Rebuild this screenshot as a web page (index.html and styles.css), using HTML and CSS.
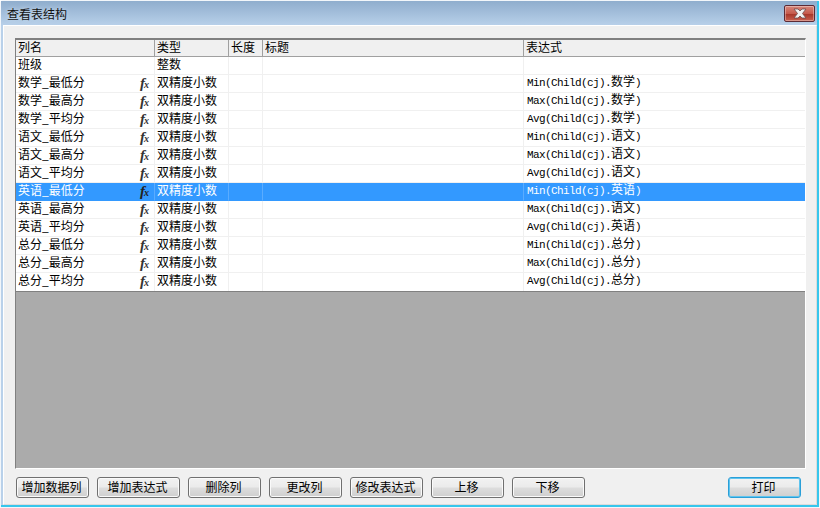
FILE: index.html
```html
<!DOCTYPE html>
<html lang="zh">
<head>
<meta charset="utf-8">
<title>查看表结构</title>
<link rel="stylesheet" href="styles.css">
</head>
<body>
<div class="window">
 <div class="frame">
  <div class="titlebar">
    <span class="title">查看表结构</span>
    <span class="close"><svg width="16" height="11" viewBox="0 0 16 11"><path d="M2 1h4l2 2 2-2h4l-3.500 4.500 3.500 4.500h-4l-2-2-2 2H2l3.500-4.500z" fill="#f2f2f2" stroke="#6b4a4a" stroke-width="0.8"/></svg></span>
  </div>
  <div class="client">
    <div class="grid-area">
      <div class="row head"><div class="c c1">列名</div><div class="c c2">类型</div><div class="c c3">长度</div><div class="c c4">标题</div><div class="c c5 headlast">表达式</div></div>
      <div class="row"><div class="c c1">班级</div><div class="c c2">整数</div><div class="c c3"></div><div class="c c4"></div><div class="c c5"></div></div>
      <div class="row"><div class="c c1">数学_最低分<span class="fx">f<small>x</small></span></div><div class="c c2">双精度小数</div><div class="c c3"></div><div class="c c4"></div><div class="c c5 expr">Min(Child(cj).<span class="cjk">数学</span>)</div></div>
      <div class="row"><div class="c c1">数学_最高分<span class="fx">f<small>x</small></span></div><div class="c c2">双精度小数</div><div class="c c3"></div><div class="c c4"></div><div class="c c5 expr">Max(Child(cj).<span class="cjk">数学</span>)</div></div>
      <div class="row"><div class="c c1">数学_平均分<span class="fx">f<small>x</small></span></div><div class="c c2">双精度小数</div><div class="c c3"></div><div class="c c4"></div><div class="c c5 expr">Avg(Child(cj).<span class="cjk">数学</span>)</div></div>
      <div class="row"><div class="c c1">语文_最低分<span class="fx">f<small>x</small></span></div><div class="c c2">双精度小数</div><div class="c c3"></div><div class="c c4"></div><div class="c c5 expr">Min(Child(cj).<span class="cjk">语文</span>)</div></div>
      <div class="row"><div class="c c1">语文_最高分<span class="fx">f<small>x</small></span></div><div class="c c2">双精度小数</div><div class="c c3"></div><div class="c c4"></div><div class="c c5 expr">Max(Child(cj).<span class="cjk">语文</span>)</div></div>
      <div class="row"><div class="c c1">语文_平均分<span class="fx">f<small>x</small></span></div><div class="c c2">双精度小数</div><div class="c c3"></div><div class="c c4"></div><div class="c c5 expr">Avg(Child(cj).<span class="cjk">语文</span>)</div></div>
      <div class="row selected"><div class="c c1">英语_最低分<span class="fx">f<small>x</small></span></div><div class="c c2">双精度小数</div><div class="c c3"></div><div class="c c4"></div><div class="c c5 expr">Min(Child(cj).<span class="cjk">英语</span>)</div></div>
      <div class="row"><div class="c c1">英语_最高分<span class="fx">f<small>x</small></span></div><div class="c c2">双精度小数</div><div class="c c3"></div><div class="c c4"></div><div class="c c5 expr">Max(Child(cj).<span class="cjk">语文</span>)</div></div>
      <div class="row"><div class="c c1">英语_平均分<span class="fx">f<small>x</small></span></div><div class="c c2">双精度小数</div><div class="c c3"></div><div class="c c4"></div><div class="c c5 expr">Avg(Child(cj).<span class="cjk">英语</span>)</div></div>
      <div class="row"><div class="c c1">总分_最低分<span class="fx">f<small>x</small></span></div><div class="c c2">双精度小数</div><div class="c c3"></div><div class="c c4"></div><div class="c c5 expr">Min(Child(cj).<span class="cjk">总分</span>)</div></div>
      <div class="row"><div class="c c1">总分_最高分<span class="fx">f<small>x</small></span></div><div class="c c2">双精度小数</div><div class="c c3"></div><div class="c c4"></div><div class="c c5 expr">Max(Child(cj).<span class="cjk">总分</span>)</div></div>
      <div class="row last"><div class="c c1">总分_平均分<span class="fx">f<small>x</small></span></div><div class="c c2">双精度小数</div><div class="c c3"></div><div class="c c4"></div><div class="c c5 expr">Avg(Child(cj).<span class="cjk">总分</span>)</div></div>
      <div class="empty"></div>
    </div>
    <div class="buttons">
      <button class="btn">增加数据列</button>
      <button class="btn wide">增加表达式</button>
      <button class="btn">删除列</button>
      <button class="btn">更改列</button>
      <button class="btn">修改表达式</button>
      <button class="btn">上移</button>
      <button class="btn">下移</button>
      <button class="btn primary">打印</button>
    </div>
  </div>
 </div>
</div>
</body>
</html>
```
FILE: styles.css
```css
* { box-sizing: border-box; }
html, body { margin: 0; padding: 0; }
body {
  width: 820px;
  height: 508px;
  overflow: hidden;
  font-family: "Noto Sans CJK SC", "Liberation Sans", sans-serif;
  font-size: 12px;
  color: #000;
}
.window {
  width: 820px;
  height: 508px;
  border: 1px solid #f2f6fa;
  border-radius: 3px 3px 0 0;
  background: #f2f6fa;
}
.frame {
  height: 100%;
  display: flex;
  flex-direction: column;
  background: linear-gradient(#8fadcd, #b9d1ea 25px);
  border-right: 2px solid #36c6ec;
  border-bottom: 2px solid #36c6ec;
}
.titlebar {
  height: 24px;
  flex: none;
  display: flex;
  align-items: flex-start;
  justify-content: space-between;
  padding-left: 6px;
}
.title {
  line-height: 17px;
  padding-top: 4px;
  color: #111;
  text-shadow: 0 0 4px #cfe0f0;
}
.close {
  width: 31px;
  height: 17px;
  margin: 4px 2px 0 0;
  display: flex;
  align-items: center;
  justify-content: center;
  border: 1px solid #5b2a35;
  border-radius: 2px;
  background: linear-gradient(#d6877b, #c65a4c 50%, #a8372a 55%, #c9604f);
  box-shadow: inset 0 0 0 1px rgba(255, 255, 255, 0.35);
}
.client {
  flex: 1;
  min-height: 0;
  margin-left: 2px;
  background: #f0f0f0;
  border-left: 1px solid #fff;
  border-top: 1px solid #fff;
  border-right: 1px solid #dcdcdc;
  border-bottom: 1px solid #dcdcdc;
  padding: 12px 0 0 11px;
  display: flex;
  flex-direction: column;
}
.grid-area {
  width: 791px;
  height: 431px;
  flex: none;
  display: flex;
  flex-direction: column;
  border: 1px solid #808080;
  border-top: 2px solid #808080;
  border-right-color: #fff;
  border-bottom-color: #fff;
  background: #ababab;
}
.row {
  display: grid;
  grid-template-columns: 139px 74px 34px 261px 1fr;
  height: 18px;
  flex: none;
  background: #fff;
  line-height: 14px;
}
.head {
  height: 17px;
  background: #f0f0f0;
  border-bottom: 1px solid #a0a0a0;
}
.head .c { border-right: 1px solid #a0a0a0; border-bottom: 0; }
.head .headlast { border-right: 0; }
.c {
  padding-left: 2px;
  border-right: 1px solid #f0f0f0;
  border-bottom: 1px solid #f0f0f0;
  white-space: nowrap;
  position: relative;
}
.c5 { border-right: 0; }
.expr {
  padding-left: 3px;
  font-family: "Liberation Mono", "Noto Sans CJK SC", monospace;
  font-size: 11px;
  letter-spacing: -0.6px;
  line-height: 12px;
}
.cjk {
  font-family: "Noto Sans CJK SC", sans-serif;
  font-size: 12px;
  line-height: 12px;
  letter-spacing: 0;
}
.fx {
  position: absolute;
  right: 5px;
  top: 1px;
  font-family: "Liberation Serif", serif;
  font-style: italic;
  font-weight: bold;
  font-size: 15px;
  line-height: 14px;
  color: #333;
}
.fx small { font-size: 10px; margin-left: -1px; }
.selected { background: #3399ff; color: #fff; }
.selected .c { border-right-color: #5aacff; border-bottom-color: #3399ff; }
.selected .fx { color: #222; }
.last { border-bottom: 1px solid #808080; height: 19px; }
.last .c { border-bottom: 0; }
.empty { flex: 1; background: #ababab; }
.buttons {
  display: flex;
  gap: 8px;
  margin-top: 8px;
  padding-left: 1px;
}
.btn {
  width: 73px;
  height: 21px;
  padding: 0 2px 2px 0;
  font-family: inherit;
  font-size: 12px;
  line-height: 16px;
  color: #000;
  border: 1px solid #707070;
  border-radius: 3px;
  background: linear-gradient(#f2f2f2, #ebebeb 48%, #dddddd 52%, #cfcfcf);
  box-shadow: inset 0 0 0 1px #fafafa;
}
.wide { width: 83px; }
.primary {
  margin-left: auto;
  margin-right: 15px;
  border-color: #2a9fd8;
  box-shadow: inset 0 0 0 1px #5fc4ee;
}
```
